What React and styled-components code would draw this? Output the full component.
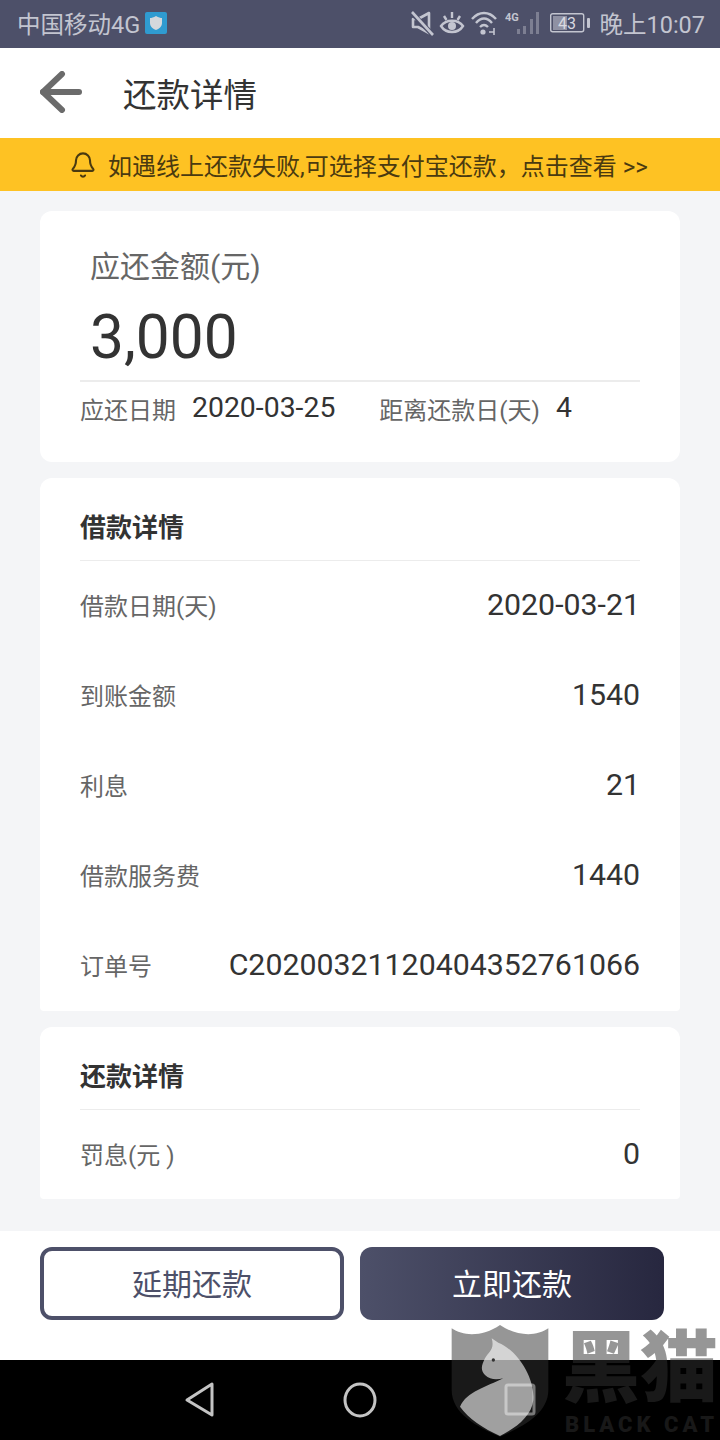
import React from "react";
import styled, { createGlobalStyle } from "styled-components";
import { Bell } from "lucide-react";

const GlobalStyle = createGlobalStyle`
  html, body {
    margin: 0;
    padding: 0;
    background: #f4f5f7;
    font-family: Roboto, "Noto Sans CJK SC", sans-serif;
  }
`;

const Page = styled.div`
  position: relative;
  width: 720px;
  height: 1440px;
  overflow: hidden;
  display: flex;
  flex-direction: column;
  background: #f4f5f7;
`;

const StatusBar = styled.div`
  height: 48px;
  box-sizing: border-box;
  background: #4d5069;
  color: #c3c5d0;
  font-size: 23.5px;
  display: flex;
  align-items: center;
  justify-content: space-between;
  padding: 0 15px 2px 17px;
`;

const StatusGroup = styled.div`
  display: flex;
  align-items: center;
  gap: ${(p) => p.$gap || 5}px;
`;

const StatusTime = styled.span`
  margin-left: 4px;
`;

const NavBar = styled.div`
  height: 90px;
  box-sizing: border-box;
  background: #fff;
  display: flex;
  align-items: center;
  padding: 0 0 2px 40px;
  gap: 41px;
`;

const PageTitle = styled.div`
  font-size: 33.5px;
  color: #333;
`;

const Notice = styled.div`
  height: 53px;
  box-sizing: border-box;
  background: #fec223;
  color: #4a3a10;
  font-size: 24px;
  display: flex;
  align-items: center;
  justify-content: center;
  gap: 11px;
  padding-right: 3px;
`;

const Content = styled.div`
  flex: 1;
  padding: 20px 40px 0;
  display: flex;
  flex-direction: column;
`;

const Card = styled.section`
  background: #fff;
  border-radius: ${(p) => p.$radius || "12px"};
  padding: 0 40px;
  margin-bottom: ${(p) => p.$gap || 0}px;
`;

const AmountLabel = styled.div`
  padding: 36px 0 0 10px;
  font-size: 30px;
  line-height: 40px;
  color: #666;
`;

const Amount = styled.div`
  padding: 0 0 5px 10px;
  font-size: 60.4px;
  line-height: 74px;
  margin-top: 14px;
  color: #333;
  border-bottom: 2px solid #ececec;
`;

const DueRow = styled.div`
  height: 80px;
  padding-bottom: 27px;
  box-sizing: border-box;
  display: flex;
  align-items: center;
`;

const DueLabel = styled.span`
  font-size: 24px;
  color: #666;
  margin-right: ${(p) => p.$gap}px;
`;

const DueValue = styled.span`
  font-size: 28.4px;
  color: #333;
  padding-bottom: 2px;
  margin-right: ${(p) => p.$gap || 0}px;
`;

const SectionTitle = styled.div`
  height: 83px;
  box-sizing: border-box;
  border-bottom: 1px solid #ececec;
  display: flex;
  align-items: center;
  padding-top: 13px;
  font-size: 26px;
  font-weight: 700;
  color: #333;
`;

const Row = styled.div`
  height: ${(p) => p.$height || 90}px;
  box-sizing: border-box;
  padding-bottom: ${(p) => (p.$height ? 2 : 3)}px;
  display: flex;
  align-items: center;
  justify-content: space-between;
`;

const RowLabel = styled.span`
  font-size: 24px;
  color: #666;
`;

const RowValue = styled.span`
  font-size: 30.3px;
  color: #333;
`;

const Footer = styled.div`
  height: 129px;
  box-sizing: border-box;
  background: #fff;
  padding: 16px 56px 0 40px;
  display: flex;
  gap: 16px;
`;

const Button = styled.button`
  width: 304px;
  height: 73px;
  box-sizing: border-box;
  border-radius: 12px;
  font-family: inherit;
  font-size: 30px;
  padding: 0 0 4px;
  color: ${(p) => (p.$primary ? "#fff" : "#4d5069")};
  background: ${(p) =>
    p.$primary ? "linear-gradient(90deg, #4d5069, #27273f)" : "#fff"};
  border: ${(p) => (p.$primary ? "none" : "4px solid #4d5069")};
`;

const SystemBar = styled.div`
  height: 80px;
  background: #000;
  position: relative;
`;

const SystemIcon = styled.svg`
  position: absolute;
  left: ${(p) => p.$left}px;
  top: 20px;
`;

const Watermark = styled.div`
  position: absolute;
  left: 440px;
  top: 1320px;
  width: 280px;
  height: 120px;
  pointer-events: none;
`;

const WatermarkName = styled.div`
  position: absolute;
  left: 122px;
  top: 11px;
  font-size: 78px;
  line-height: 78px;
  font-weight: 900;
  white-space: nowrap;
  color: rgba(49, 49, 49, 0.51);
`;

const WatermarkLatin = styled.div`
  position: absolute;
  left: 125px;
  top: 93px;
  font-size: 22px;
  line-height: 24px;
  font-weight: 900;
  letter-spacing: 4px;
  white-space: nowrap;
  color: rgba(49, 49, 49, 0.51);
`;

const details = [
  ["借款日期(天)", "2020-03-21"],
  ["到账金额", "1540"],
  ["利息", "21"],
  ["借款服务费", "1440"],
  ["订单号", "C20200321120404352761066"],
];

const BackArrow = () => (
  <svg width="42" height="42" viewBox="0 0 42 42" fill="none" stroke="#6b6b6b" strokeWidth="6" strokeLinecap="round" strokeLinejoin="round">
    <path d="M22 3 L3 21 L22 39" />
    <path d="M3 21 H39" />
  </svg>
);

const CarrierBadge = () => (
  <svg width="22" height="22" viewBox="0 0 22 22">
    <rect width="22" height="22" rx="2" fill="#2f9bd0" />
    <path d="M11 4 C13.5 5.5 15.5 6 17 6 V11 C17 14.5 14 17 11 18 C8 17 5 14.5 5 11 V6 C6.5 6 8.5 5.5 11 4Z" fill="#d4d8dc" />
  </svg>
);

const StatusIcons = () => (
  <StatusGroup>
    <svg width="24" height="26" viewBox="0 0 24 26" fill="none" stroke="#c3c5d0" strokeWidth="2.6" strokeLinejoin="round">
      <path d="M3 9 V17 H8 L19 23 V3 L8 9 Z" />
      <path d="M1 2 L23 25" stroke="#4d5069" strokeWidth="5" />
      <path d="M2 2 L23 25" />
    </svg>
    <svg width="26" height="26" viewBox="0 0 26 26" fill="none" stroke="#c3c5d0" strokeWidth="2.4">
      <path d="M2 16 C7 9 19 9 24 16 C19 24 7 24 2 16 Z" />
      <circle cx="13" cy="16" r="4" fill="#c3c5d0" stroke="none" />
      <path d="M5 6 L7.5 10 M13 2 V8 M21 6 L18.5 10" />
    </svg>
    <svg width="30" height="26" viewBox="0 0 30 26" fill="none" stroke="#c3c5d0" strokeWidth="2.4">
      <path d="M2 9 C9 1 19 1 26 9 M6 13 C11 7 17 7 22 13 M10 17 C12.5 14.5 15.5 14.5 18 17" />
      <circle cx="13" cy="22" r="2.6" fill="#c3c5d0" stroke="none" />
      <path d="M19 22 H24 M24 18 V25" strokeWidth="1.6" />
    </svg>
    <svg width="34" height="26" viewBox="0 0 34 26">
      <text x="0" y="11" fontSize="11" fontWeight="700" fill="#c3c5d0">4G</text>
      <rect x="12" y="19" width="3" height="5" fill="#7d7f92" />
      <rect x="18" y="16" width="3" height="8" fill="#7d7f92" />
      <rect x="25" y="9" width="3" height="15" fill="#7d7f92" />
      <rect x="31" y="2" width="3" height="22" fill="#7d7f92" />
    </svg>
    <svg width="46" height="22" viewBox="0 0 46 22">
      <rect x="6.7" y="1.7" width="33" height="18" rx="2" fill="none" stroke="#c3c5d0" strokeWidth="1.4" />
      <rect x="9" y="4" width="14" height="14" fill="#8f91a3" />
      <rect x="43" y="6" width="3" height="10" rx="1" fill="#c3c5d0" />
      <text x="23" y="17" fontSize="16" textAnchor="middle" fill="#d8d9e0">43</text>
    </svg>
    <StatusTime>晚上10:07</StatusTime>
  </StatusGroup>
);

const App = () => (
  <Page>
    <GlobalStyle />
    <StatusBar>
      <StatusGroup>
        <span>中国移动4G</span>
        <CarrierBadge />
      </StatusGroup>
      <StatusIcons />
    </StatusBar>
    <NavBar>
      <BackArrow />
      <PageTitle>还款详情</PageTitle>
    </NavBar>
    <Notice>
      <Bell size={28} strokeWidth={1.8} />
      <span>如遇线上还款失败,可选择支付宝还款，点击查看 &gt;&gt;</span>
    </Notice>
    <Content>
      <Card $gap={16}>
        <AmountLabel>应还金额(元)</AmountLabel>
        <Amount>3,000</Amount>
        <DueRow>
          <DueLabel $gap={16}>应还日期</DueLabel>
          <DueValue $gap={44}>2020-03-25</DueValue>
          <DueLabel $gap={16}>距离还款日(天)</DueLabel>
          <DueValue>4</DueValue>
        </DueRow>
      </Card>
      <Card $gap={16} $radius="12px 12px 4px 4px">
        <SectionTitle>借款详情</SectionTitle>
        {details.map(([label, value]) => (
          <Row key={label}>
            <RowLabel>{label}</RowLabel>
            <RowValue>{value}</RowValue>
          </Row>
        ))}
      </Card>
      <Card $radius="12px 12px 4px 4px">
        <SectionTitle>还款详情</SectionTitle>
        <Row $height={89}>
          <RowLabel>罚息(元 )</RowLabel>
          <RowValue>0</RowValue>
        </Row>
      </Card>
    </Content>
    <Footer>
      <Button>延期还款</Button>
      <Button $primary>立即还款</Button>
    </Footer>
    <SystemBar>
      <SystemIcon $left={184} width="32" height="40" viewBox="0 0 32 40" fill="none" stroke="#c4c4c4" strokeWidth="3" strokeLinejoin="round">
        <path d="M28 4 V35 L3 20 Z" />
      </SystemIcon>
      <SystemIcon $left={343} width="34" height="40" viewBox="0 0 34 40" fill="none" stroke="#c4c4c4" strokeWidth="3">
        <ellipse cx="17" cy="20" rx="15" ry="16" />
      </SystemIcon>
      <SystemIcon $left={503} width="34" height="40" viewBox="0 0 34 40" fill="none" stroke="#c4c4c4" strokeWidth="3" strokeLinejoin="round">
        <rect x="3" y="5" width="28" height="29" rx="2" />
      </SystemIcon>
    </SystemBar>
    <Watermark>
      <svg width="110" height="120" viewBox="0 0 330 360">
        <path d="M35 25 C70 50 130 50 180 15 C230 50 290 50 325 25 V210 C325 280 250 320 180 350 C110 320 35 280 35 210 Z" fill="rgba(49,49,49,0.51)" />
        <path d="M155 55 L175 68 C230 90 285 170 280 240 C275 290 225 325 180 348 C130 325 85 295 60 260 C80 215 140 200 190 175 C170 180 150 180 135 165 C120 150 125 135 135 115 C145 95 165 90 155 55 Z" fill="rgba(255,255,255,0.59)" />
        <circle cx="160" cy="120" r="5" fill="#333" />
      </svg>
      <WatermarkName>黑猫</WatermarkName>
      <WatermarkLatin>BLACK CAT</WatermarkLatin>
    </Watermark>
  </Page>
);

export default App;
